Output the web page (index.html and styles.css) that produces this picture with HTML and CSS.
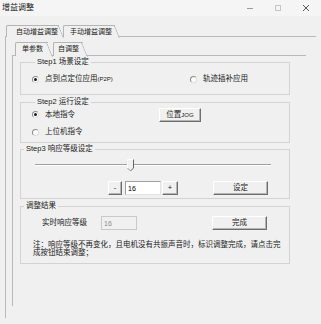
FILE: index.html
```html
<!DOCTYPE html>
<html lang="zh">
<head>
    <meta charset="UTF-8">
    <title>增益调整</title>
    <link rel="stylesheet" href="styles.css">
</head>
<body>
    <div class="titlebar">
        <span class="title">增益调整</span>
        <div class="controls">
            <svg class="ctl" width="10" height="10" viewBox="0 0 10 10"><path d="M2 5.5h6" stroke="#9a9a9a" stroke-width="1"/></svg>
            <svg class="ctl" width="10" height="10" viewBox="0 0 10 10"><rect x="2.5" y="2.5" width="5" height="5" fill="none" stroke="#c4c4c4"/></svg>
            <svg class="ctl" width="10" height="10" viewBox="0 0 10 10"><path d="M2 2l6 6M8 2l-6 6" stroke="#444" stroke-width="0.9"/></svg>
        </div>
    </div>

    <div class="outer">
        <div class="tabs">
            <div class="tab on t1">自动增益调整</div>
            <div class="tab t2">手动增益调整</div>
        </div>
        <div class="outer-panel">
            <div class="tabs inner-tabs">
                <div class="tab on t3">单参数</div>
                <div class="tab t4">自调整</div>
            </div>
            <div class="inner-panel">
                <fieldset class="group g1">
                    <legend>Step1 场景设定</legend>
                    <div class="row">
                        <label class="opt w-p2p"><span class="radio on"></span>点到点定位应用<small>(P2P)</small></label>
                        <label class="opt"><span class="radio"></span>轨迹插补应用</label>
                    </div>
                </fieldset>

                <fieldset class="group g2">
                    <legend>Step2 运行设定</legend>
                    <div class="row tall">
                        <label class="opt w-local"><span class="radio on"></span>本地指令</label>
                        <button class="btn jog">位置<small>JOG</small></button>
                    </div>
                    <div class="row second">
                        <label class="opt"><span class="radio"></span>上位机指令</label>
                    </div>
                </fieldset>

                <fieldset class="group g3">
                    <legend>Step3 响应等级设定</legend>
                    <div class="slider">
                        <svg width="236" height="14" viewBox="0 0 236 14">
                            <rect x="0" y="6" width="236" height="1" fill="#a0a0a0"/>
                            <rect x="0" y="7" width="236" height="1" fill="#ffffff"/>
                            <polygon points="92.5,1.5 98.5,1.5 98.5,10 95.5,13 92.5,10" fill="#f0f0f0"/>
                            <path d="M92.5 10V1.5H98.5" fill="none" stroke="#ffffff"/>
                            <path d="M98.5 1.5V10L95.5 13" fill="none" stroke="#666"/>
                            <path d="M92.5 10L95.5 13" fill="none" stroke="#9a9a9a"/>
                        </svg>
                    </div>
                    <div class="row spin">
                        <button class="btn minus">-</button>
                        <input class="field spin-field" type="text" value="16">
                        <button class="btn plus">+</button>
                        <button class="btn wide set">设定</button>
                    </div>
                </fieldset>

                <fieldset class="group g4">
                    <legend>调整结果</legend>
                    <div class="row result">
                        <span class="result-label">实时响应等级</span>
                        <input class="field" type="text" value="16" disabled>
                        <button class="btn wide done">完成</button>
                    </div>
                    <p class="note">注：响应等级不再变化，且电机没有共振声音时，标识调整完成，请点击完<br>成按钮结束调整；</p>
                </fieldset>
            </div>
        </div>
    </div>
</body>
</html>
```

FILE: styles.css
```css
body {
    margin: 0;
    width: 321px;
    height: 324px;
    overflow: hidden;
    background: #f0f0f0;
    color: #1a1a1a;
    font-family: "Liberation Sans", "Noto Sans CJK SC", sans-serif;
    font-size: 7.5px;
    line-height: 10px;
}
small {
    font-size: 6px;
}
.titlebar {
    height: 16px;
    background: #f5f5f5;
    display: flex;
    align-items: center;
    justify-content: space-between;
}
.title {
    padding-left: 2px;
    font-size: 8px;
}
.controls {
    display: flex;
    gap: 18px;
    padding-right: 10px;
}
.ctl {
    display: block;
}

/* tabs */
.outer {
    margin: 9px 0 0 5px;
}
.tabs {
    display: flex;
    height: 11px;
    padding-left: 1px;
}
.tab {
    position: relative;
    z-index: 1;
    box-sizing: border-box;
    height: 12px;
    border-top: 1px solid #b4b4b4;
    border-left: 1px solid #b4b4b4;
    border-top-left-radius: 2px;
    background: #f0f0f0;
    font-size: 7px;
    line-height: 11px;
    white-space: nowrap;
}
.tab::after {
    content: '';
    position: absolute;
    z-index: -1;
    top: -1px;
    left: calc(100% - 1px);
    width: 5px;
    height: 12px;
    border-top: 1px solid #b4b4b4;
    border-right: 1px solid #b4b4b4;
    border-top-right-radius: 2px;
    background: #f0f0f0;
    transform: skewX(22deg);
    transform-origin: bottom left;
}
.tab.on {
    z-index: 2;
}
.t1 {
    width: 53px;
    padding-left: 9px;
}
.t2 {
    width: 52px;
    margin-left: 4px;
    padding-left: 6px;
}
.outer-panel {
    box-sizing: border-box;
    width: 311px;
    height: 282px;
    border-top: 1px solid #b9b9b9;
    border-left: 1px solid #b9b9b9;
    padding: 5px 0 0 6px;
}
.inner-tabs {
    height: 13px;
    padding-left: 3px;
}
.inner-tabs .tab {
    height: 14px;
    line-height: 12px;
}
.inner-tabs .tab::after {
    height: 14px;
}
.t3 {
    width: 33px;
    padding-left: 6px;
}
.t4 {
    width: 30px;
    margin-left: 5px;
    padding-left: 4px;
}
.inner-panel {
    box-sizing: border-box;
    width: 294px;
    height: 251px;
    border-top: 1px solid #b9b9b9;
    border-left: 1px solid #b9b9b9;
    padding-left: 7px;
}

/* group boxes */
.group {
    box-sizing: border-box;
    width: 270px;
    min-width: 0;
    margin: 0;
    padding: 0;
    border: 1px solid #d3d3d3;
}
.group legend {
    margin-left: 3px;
    padding: 0 2px;
    line-height: 10px;
}
.g1 {
    margin-top: 1px;
    padding: 7px 0 10px 11px;
}
.g2 {
    margin-top: 2px;
    padding: 0 0 5px 11px;
}
.g3 {
    margin-top: 1px;
    padding: 4px 0 3px 0;
}
.g4 {
    margin-top: 2px;
    padding: 5px 0 6px 0;
}
.row {
    display: flex;
    align-items: center;
    height: 10px;
}
.row.tall {
    height: 15px;
}
.row.second {
    margin-top: 5px;
}
.opt {
    display: flex;
    align-items: center;
    white-space: nowrap;
}
.w-p2p {
    width: 158px;
}
.w-local {
    width: 127px;
}
.radio {
    position: relative;
    box-sizing: border-box;
    width: 7px;
    height: 7px;
    margin-right: 6px;
    border-radius: 50%;
    border: 1px solid;
    border-color: #8c8c8c #dedede #dedede #8c8c8c;
    background: #fff;
}
.radio.on::after {
    content: '';
    position: absolute;
    left: 1px;
    top: 1px;
    width: 3px;
    height: 3px;
    border-radius: 50%;
    background: #1a1a1a;
}

/* controls */
.btn {
    box-sizing: border-box;
    height: 14px;
    padding: 0;
    border: 1px solid;
    border-color: #ffffff #6e6e6e #6e6e6e #ffffff;
    box-shadow: inset -1px -1px 0 #b4b4b4;
    background: #f0f0f0;
    color: #1a1a1a;
    font: inherit;
    line-height: 12px;
}
.jog {
    width: 42px;
}
.wide {
    width: 55px;
}
.field {
    box-sizing: border-box;
    width: 36px;
    height: 14px;
    margin: 0;
    padding: 0 0 0 2px;
    border: 1px solid;
    border-color: #a0a0a0 #e3e3e3 #e3e3e3 #a0a0a0;
    background: #fff;
    color: #000;
    font: inherit;
    font-size: 7px;
}
.field:disabled {
    border-color: #c9c9c9;
    background: #f0f0f0;
    color: #8c8c8c;
}
.slider {
    height: 14px;
    margin-left: 14px;
}
.slider svg {
    display: block;
}
.row.spin {
    height: 14px;
    margin-top: 9px;
}
.minus {
    width: 14px;
    margin-left: 87px;
}
.spin-field {
    margin-left: 3px;
}
.plus {
    width: 16px;
    margin-left: 1px;
}
.set {
    margin-left: 35px;
}
.row.result {
    height: 14px;
}
.result-label {
    width: 59px;
    margin-left: 21px;
}
.done {
    margin-left: 75px;
}
.note {
    margin: 11px 0 0 12px;
    line-height: 8px;
    white-space: nowrap;
}
```
